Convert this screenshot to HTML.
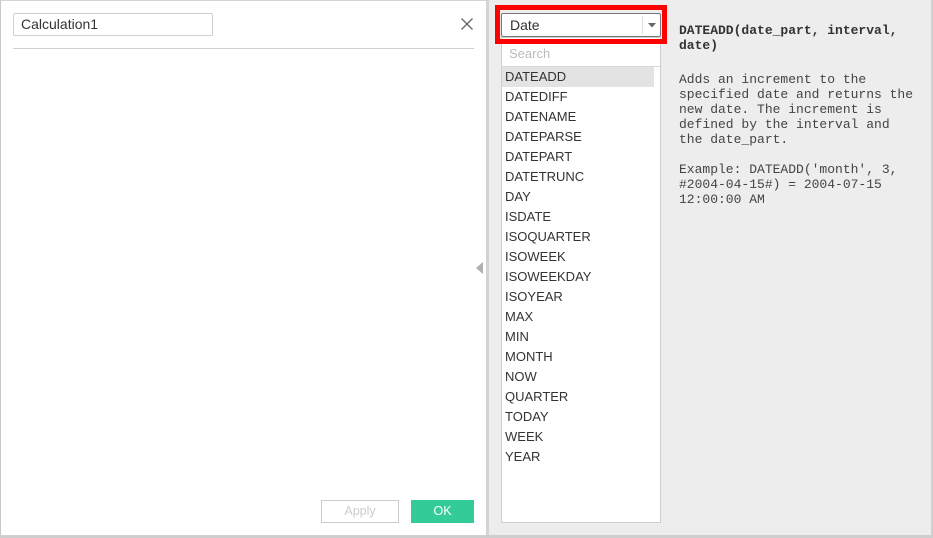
<!DOCTYPE html>
<html><head><style>
body{margin:0;width:933px;height:538px;position:relative;overflow:hidden;background:#fff;font-family:"Liberation Sans",sans-serif;}
.abs{position:absolute;}
.mono{font-family:"Liberation Mono",monospace;font-size:13px;line-height:15px;color:#444;white-space:nowrap;}
.item{position:absolute;left:3px;height:20px;line-height:20px;font-size:13px;color:#333;}
</style></head><body>
<div class="abs" style="left:0;top:0;width:486px;height:535px;background:#fff;border-left:1px solid #c8c8c8;border-top:1px solid #d4d4d4;box-sizing:border-box"></div>
<div class="abs" style="left:486px;top:0;width:3px;height:538px;background:#d4d4d4"></div>
<div class="abs" style="left:489px;top:0;width:442px;height:535px;background:#ededed"></div>
<div class="abs" style="left:931px;top:0;width:2px;height:538px;background:#d0d0d0"></div>
<div class="abs" style="left:0;top:535px;width:933px;height:3px;background:#cfcfcf"></div>

<div class="abs" style="left:13px;top:13px;width:200px;height:23px;border:1px solid #d0d0d0;border-radius:2px;box-sizing:border-box;font-size:14px;line-height:21px;padding-left:7px;color:#333">Calculation1</div>
<div class="abs" style="left:13px;top:48px;width:461px;height:1px;background:#cfcfcf"></div>
<svg class="abs" style="left:460px;top:17px" width="14" height="14"><path d="M1.5 1.5L12.5 12.5M12.5 1.5L1.5 12.5" stroke="#666" stroke-width="1.3"/></svg>
<svg class="abs" style="left:476px;top:262px" width="8" height="12"><path d="M7 0L0 6L7 12Z" fill="#b0b0b0"/></svg>

<div class="abs" style="left:321px;top:500px;width:78px;height:23px;border:1px solid #ccc;box-sizing:border-box;text-align:center;font-size:12.5px;line-height:21px;color:#ccc">Apply</div>
<div class="abs" style="left:411px;top:500px;width:63px;height:23px;background:#33cc99;text-align:center;font-size:12.5px;line-height:23px;color:#fff">OK</div>

<div class="abs" style="left:501px;top:37px;width:160px;height:486px;background:#fff;border:1px solid #cfcfcf;box-sizing:border-box">
<div class="abs" style="left:7px;top:8px;font-size:13px;color:#bbb">Search</div>
<div class="abs" style="left:0;top:28px;width:158px;height:1px;background:#d8d8d8"></div>
<div class="abs" style="left:0;top:29px;width:152px;height:20px;background:#e3e3e3"></div>
<div class="item" style="top:29px">DATEADD</div>
<div class="item" style="top:49px">DATEDIFF</div>
<div class="item" style="top:69px">DATENAME</div>
<div class="item" style="top:89px">DATEPARSE</div>
<div class="item" style="top:109px">DATEPART</div>
<div class="item" style="top:129px">DATETRUNC</div>
<div class="item" style="top:149px">DAY</div>
<div class="item" style="top:169px">ISDATE</div>
<div class="item" style="top:189px">ISOQUARTER</div>
<div class="item" style="top:209px">ISOWEEK</div>
<div class="item" style="top:229px">ISOWEEKDAY</div>
<div class="item" style="top:249px">ISOYEAR</div>
<div class="item" style="top:269px">MAX</div>
<div class="item" style="top:289px">MIN</div>
<div class="item" style="top:309px">MONTH</div>
<div class="item" style="top:329px">NOW</div>
<div class="item" style="top:349px">QUARTER</div>
<div class="item" style="top:369px">TODAY</div>
<div class="item" style="top:389px">WEEK</div>
<div class="item" style="top:409px">YEAR</div>
</div>

<div class="abs" style="left:495px;top:5px;width:172px;height:39px;border:5px solid #ff0000;box-sizing:border-box"></div>
<div class="abs" style="left:501px;top:13px;width:160px;height:24px;background:#fff;border:1px solid #777;border-radius:2px;box-sizing:border-box">
<div class="abs" style="left:8px;top:3px;font-size:14px;color:#333">Date</div>
<div class="abs" style="left:140px;top:2px;width:1px;height:18px;background:#ddd"></div>
<svg class="abs" style="left:146px;top:9px" width="8" height="5"><path d="M0 0H8L4 4.5Z" fill="#666"/></svg>
</div>

<div class="abs mono" style="left:679px;top:23px;font-weight:bold;color:#333">DATEADD(date_part, interval,<br>date)</div>
<div class="abs mono" style="left:679px;top:72px">Adds an increment to the<br>specified date and returns the<br>new date. The increment is<br>defined by the interval and<br>the date_part.</div>
<div class="abs mono" style="left:679px;top:162px">Example: DATEADD('month', 3,<br>#2004-04-15#) = 2004-07-15<br>12:00:00 AM</div>
</body></html>
